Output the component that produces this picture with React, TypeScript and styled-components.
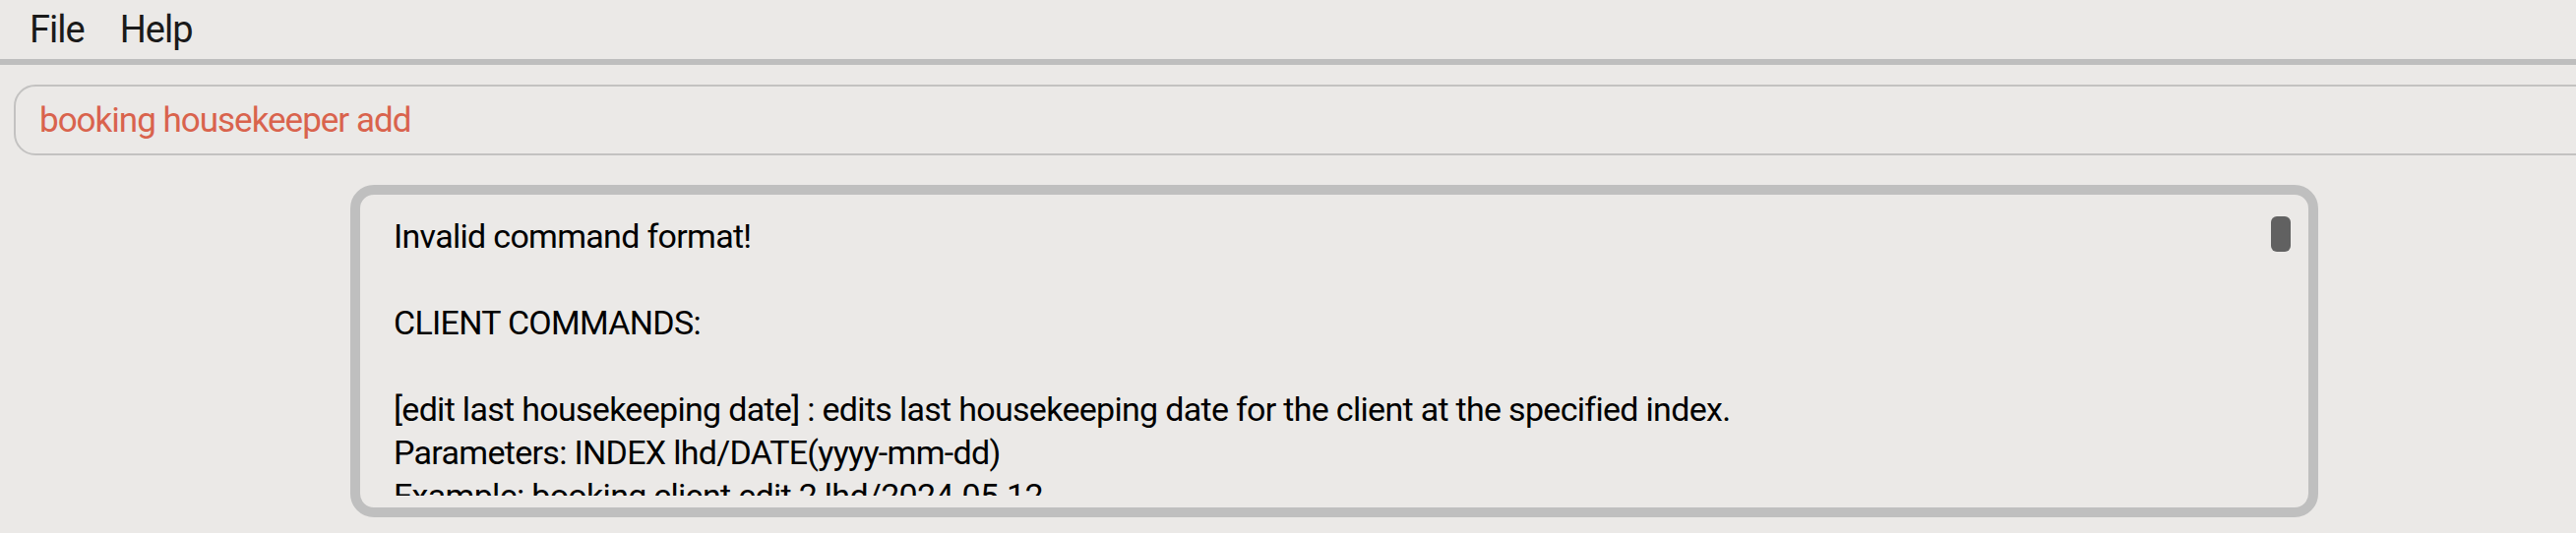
import React from "react";
import styled, { createGlobalStyle } from "styled-components";

const Global = createGlobalStyle`
  html, body { margin: 0; padding: 0; background: #ebe9e7; }
  body { font-family: Roboto, "Noto Sans", sans-serif; overflow: hidden; }
`;

const Page = styled.div`
  width: 2618px;
  height: 542px;
  background: #ebe9e7;
  display: flex;
  flex-direction: column;
  overflow: hidden;
`;

const MenuBar = styled.div`
  height: 60px;
  display: flex;
  align-items: center;
  padding-left: 12px;
  border-bottom: 6px solid #bebebe;
  flex: none;
`;

const MenuItem = styled.div`
  font-size: 38px;
  color: #1a1a1a;
  padding: 0 18px;
  line-height: 60px;
  letter-spacing: -1px;
`;

const CommandRow = styled.div`
  padding: 20px 0 0 14px;
  overflow: hidden;
  flex: none;
`;

const CommandInput = styled.div`
  box-sizing: border-box;
  width: calc(100% + 40px);
  height: 72px;
  border: 2px solid #c3c2c1;
  border-radius: 22px;
  padding-left: 24px;
  display: flex;
  align-items: center;
  font-size: 35px;
  letter-spacing: -1px;
  color: #d9634d;
`;

const ResultRow = styled.div`
  padding: 30px 0 0 356px;
  flex: none;
`;

const ResultBox = styled.div`
  position: relative;
  box-sizing: border-box;
  width: 2000px;
  height: 338px;
  border: 10px solid #bfbfbf;
  border-radius: 24px;
  padding-bottom: 12px;
  background: #ebe9e7;
`;

const Viewport = styled.div`
  height: 100%;
  overflow: hidden;
`;

const ResultText = styled.div`
  padding: 20px 0 0 34px;
  font-size: 34px;
  line-height: 44px;
  letter-spacing: -0.7px;
  color: #000;
  white-space: pre;
`;

const Thumb = styled.div`
  position: absolute;
  top: 22px;
  right: 18px;
  width: 20px;
  height: 36px;
  border-radius: 6px;
  background: #616161;
`;

const message = `Invalid command format!

CLIENT COMMANDS:

[edit last housekeeping date] : edits last housekeeping date for the client at the specified index.
Parameters: INDEX lhd/DATE(yyyy-mm-dd)
Example: booking client edit 2 lhd/2024-05-12`;

export default function App() {
  return (
    <Page>
      <Global />
      <MenuBar>
        <MenuItem>File</MenuItem>
        <MenuItem>Help</MenuItem>
      </MenuBar>
      <CommandRow>
        <CommandInput>booking housekeeper add</CommandInput>
      </CommandRow>
      <ResultRow>
        <ResultBox>
          <Viewport>
            <ResultText>{message}</ResultText>
          </Viewport>
          <Thumb />
        </ResultBox>
      </ResultRow>
    </Page>
  );
}
